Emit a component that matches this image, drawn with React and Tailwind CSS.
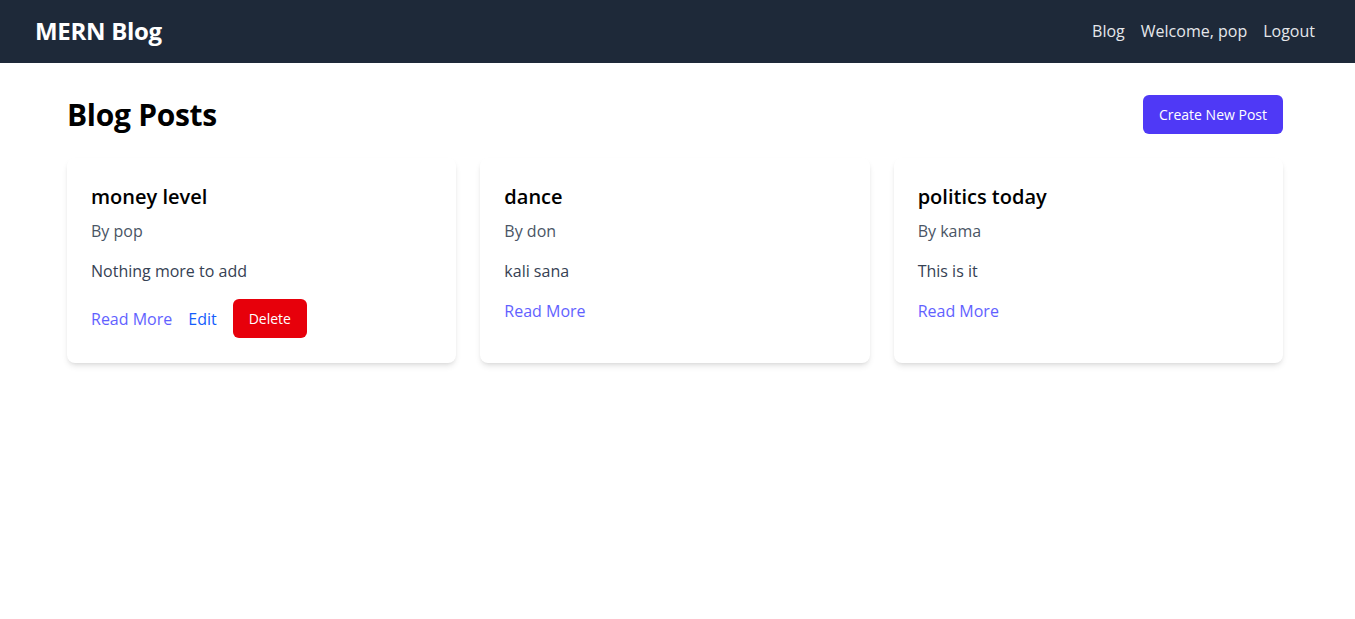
import React from "react";

const posts = [
  { id: 1, title: "money level", author: "pop", body: "Nothing more to add", mine: true },
  { id: 2, title: "dance", author: "don", body: "kali sana", mine: false },
  { id: 3, title: "politics today", author: "kama", body: "This is it", mine: false },
];

const PostCard = ({ post }) => (
  <div className="bg-white rounded-lg shadow-md px-6 pt-[25px] pb-[25px] min-h-[203px]">
    <h2 className="text-xl font-semibold text-black leading-7">{post.title}</h2>
    <p className="mt-2 text-gray-600 leading-6">By {post.author}</p>
    <p className="mt-4 text-gray-700 leading-6">{post.body}</p>
    <div className="mt-4 flex items-center gap-4">
      <a href="#" className="text-indigo-500">Read More</a>
      {post.mine && (
        <>
          <a href="#" className="text-blue-600">Edit</a>
          <button className="bg-red-600 text-white text-sm rounded-md px-4 h-[39px]">Delete</button>
        </>
      )}
    </div>
  </div>
);

const App = () => {
  return (
    <div className="min-h-screen bg-white font-['Open_Sans',sans-serif]">
      {/* Navbar */}
      <nav className="bg-gray-800 h-[63px] flex items-center justify-between pl-[35px] pr-[40px] pb-[2px]">
        <span className="text-white text-2xl font-bold tracking-[-0.3px]">MERN Blog</span>
        <div className="flex items-center gap-4 text-gray-200">
          <a href="#">Blog</a>
          <span>Welcome, pop</span>
          <button>Logout</button>
        </div>
      </nav>

      {/* Content */}
      <main className="w-[1216px] ml-[67px] pt-8">
        <div className="flex items-center justify-between">
          <h1 className="text-3xl font-bold text-black tracking-[-0.3px]">Blog Posts</h1>
          <button className="bg-indigo-600 text-white text-sm rounded-md px-4 h-[39px]">Create New Post</button>
        </div>
        <div className="mt-6 grid grid-cols-3 gap-6">
          {posts.map((p) => (
            <PostCard key={p.id} post={p} />
          ))}
        </div>
      </main>
    </div>
  );
};

export default App;
